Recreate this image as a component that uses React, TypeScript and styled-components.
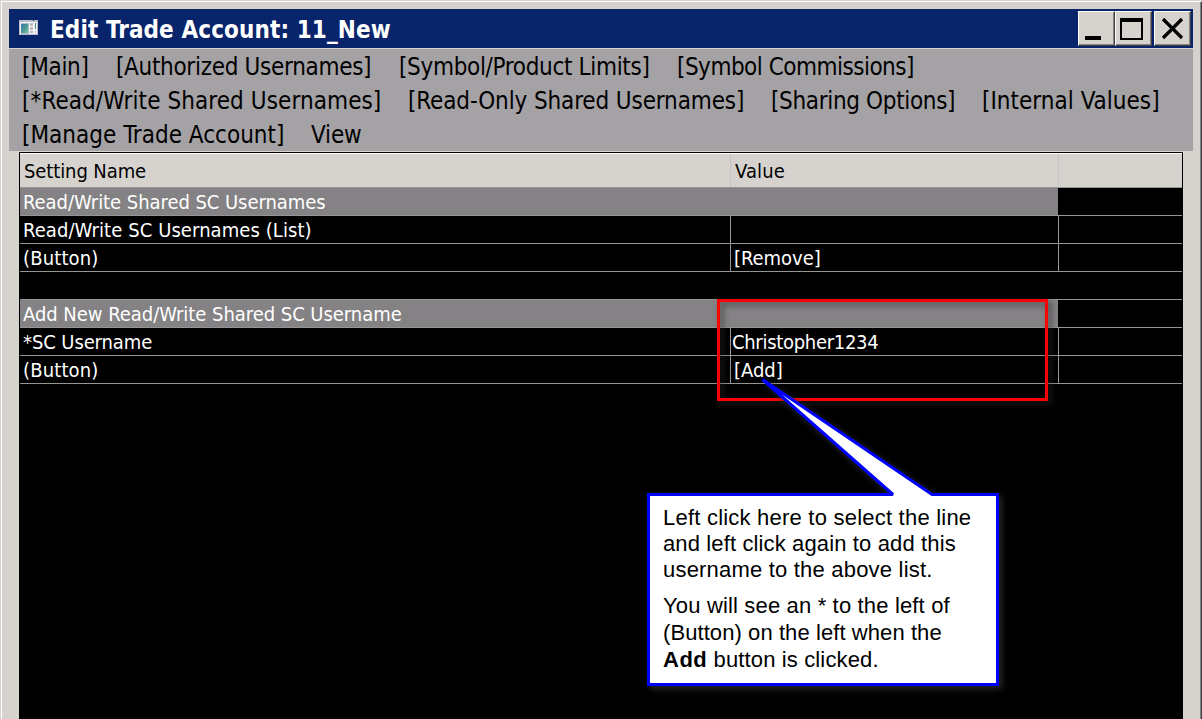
import React from 'react';
import styled, { createGlobalStyle } from 'styled-components';

const Global = createGlobalStyle`
  * { box-sizing: border-box; }
  html, body { margin: 0; padding: 0; }
  body { background: #d6d3ce; overflow: hidden; }
`;

const Window = styled.div`
  position: relative;
  width: 1202px;
  height: 719px;
  display: flex;
  background: #d6d3ce;
  overflow: hidden;
  padding: 1px 0 0 1px;
  font-family: 'DejaVu Sans Condensed', Tahoma, 'DejaVu Sans', sans-serif;
  color: #000;
`;

const Frame = styled.div`
  width: 1201px;
  height: 730px;
  padding: 7px 7px 0;
  border-style: solid;
  border-width: 1px;
  border-color: #fff #3f4044 #3f4044 #fff;
  box-shadow: inset -1px 0 0 #848284;
`;

const TitleBar = styled.header`
  display: flex;
  align-items: center;
  width: 1184px;
  height: 39px;
  padding: 0 2px 0 10px;
  background: #08246b;
`;

const AppIcon = styled.svg`
  width: 19px;
  height: 15px;
  margin-top: -2px;
`;

const Title = styled.h1`
  flex: 1;
  margin: 2px 0 0 12px;
  color: #fff;
  font-size: 24px;
  line-height: 30px;
  font-weight: bold;
  letter-spacing: 0.1px;
  white-space: nowrap;
`;

const WindowButtons = styled.div`
  display: flex;
  margin-bottom: 1px;
`;

const WindowButton = styled.button<{ $apart?: boolean }>`
  display: block;
  width: 37px;
  height: 35px;
  margin-left: ${(p) => (p.$apart ? 2 : 0)}px;
  padding: 0;
  border: 1px solid;
  border-color: #fff #424142 #424142 #fff;
  background: #d6d3ce;
  box-shadow: inset -1px -1px 0 #848284;

  svg { display: block; }
`;

const Menu = styled.nav`
  width: 1184px;
  height: 102px;
  margin-top: 1px;
  padding-left: 13px;
  background: #a5a2a5;
`;

const MenuLine = styled.div`
  display: flex;
  height: 34px;
`;

const MenuItem = styled.span<{ $w: number; $ls: number }>`
  flex: none;
  width: ${(p) => p.$w}px;
  font-size: 24px;
  line-height: 36px;
  letter-spacing: ${(p) => p.$ls}px;
  white-space: nowrap;
`;

const Table = styled.section`
  width: 1164px;
  height: 600px;
  margin: 1px 0 0 10px;
  border: 1px solid #000;
  background: #000;
`;

const Row = styled.div`
  display: grid;
  grid-template-columns: 711px 328px 123px;
  grid-template-rows: 100%;
  height: 28px;
  border-bottom: 1px solid #949694;
  color: #fff;
`;

const HeaderRow = styled(Row)`
  height: 35px;
  background: #d6d3ce;
  border-top: 1px solid #fff;
  color: #000;
`;

const Cell = styled.div<{ $ls?: number; $pad?: number }>`
  padding-left: ${(p) => p.$pad ?? 3}px;
  border-right: 1px solid #949694;
  font-size: 20px;
  line-height: 29px;
  letter-spacing: ${(p) => p.$ls ?? 0}px;
  white-space: nowrap;

  &:last-child { border-right: 0; }
`;

const HeaderCell = styled(Cell)`
  line-height: 35px;
  border-right-color: #c6c3c6;
`;

const GroupCell = styled.div<{ $ls: number }>`
  grid-column: 1 / 3;
  margin-right: 1px;
  padding-left: 3px;
  background: #848284;
  font-size: 20px;
  line-height: 29px;
  letter-spacing: ${(p) => p.$ls}px;
  white-space: nowrap;
`;

const Highlight = styled.div`
  position: absolute;
  left: 717px;
  top: 299px;
  width: 331px;
  height: 102px;
  border: 3px solid #f00;
  filter: drop-shadow(3px 3px 3px rgba(40, 40, 40, 0.8));
`;

const CalloutShape = styled.svg`
  position: absolute;
  left: 640px;
  top: 370px;
  width: 380px;
  height: 340px;
  filter: drop-shadow(3px 3px 3px rgba(50, 50, 50, 0.8));
`;

const CalloutText = styled.div`
  position: absolute;
  left: 663px;
  top: 505px;
  font-family: 'Liberation Sans', Arial, sans-serif;
  font-size: 22px;

  p { margin: 0 0 10px; }
`;

const TextLine = styled.span<{ $ls: number; $h: number }>`
  display: block;
  height: ${(p) => p.$h}px;
  line-height: 26px;
  letter-spacing: ${(p) => p.$ls}px;
  white-space: nowrap;

  b { letter-spacing: 0.5px; }
`;

const menu = [
  [
    { text: '[Main]', w: 94, ls: -0.3 },
    { text: '[Authorized Usernames]', w: 283, ls: -0.31 },
    { text: '[Symbol/Product Limits]', w: 278, ls: -0.33 },
    { text: '[Symbol Commissions]', w: 240, ls: -0.51 },
  ],
  [
    { text: '[*Read/Write Shared Usernames]', w: 386, ls: 0.08 },
    { text: '[Read-Only Shared Usernames]', w: 363, ls: -0.13 },
    { text: '[Sharing Options]', w: 211, ls: -0.34 },
    { text: '[Internal Values]', w: 180, ls: 0.02 },
  ],
  [
    { text: '[Manage Trade Account]', w: 289, ls: 0.01 },
    { text: 'View', w: 60, ls: -0.18 },
  ],
];

export default function App() {
  return (
    <Window>
      <Global />
      <Frame>
        <TitleBar>
          <AppIcon viewBox="0 0 19 15">
            <defs>
              <linearGradient id="screen" x1="0" y1="0" x2="1" y2="1">
                <stop offset="0" stopColor="#3c78a8" />
                <stop offset="0.55" stopColor="#4a9a90" />
                <stop offset="1" stopColor="#8cc8a0" />
              </linearGradient>
            </defs>
            <rect width="19" height="15" fill="#b8bcc8" />
            <rect x="1" y="2" width="17" height="12" fill="#f4f4f6" />
            <rect x="14" y="0" width="1" height="1" fill="#31427a" />
            <rect x="2" y="3" width="8" height="11" fill="#a8bcd0" />
            <rect x="2" y="4" width="7" height="9" fill="url(#screen)" />
            <rect x="11" y="3" width="3" height="3" fill="#bdbdc0" />
            <rect x="11" y="7" width="3" height="3" fill="#bdbdc0" />
            <rect x="11" y="11" width="3" height="2" fill="#bdbdc0" />
            <rect x="16" y="3" width="1" height="6" fill="#3f8f80" />
            <rect x="16" y="11" width="1" height="2" fill="#c8c8cc" />
          </AppIcon>
          <Title>Edit Trade Account: 11_New</Title>
          <WindowButtons>
            <WindowButton aria-label="Minimize">
              <svg width="35" height="33"><rect x="6" y="24" width="16" height="4" /></svg>
            </WindowButton>
            <WindowButton aria-label="Maximize">
              <svg width="35" height="33">
                <path fillRule="evenodd" d="M4 6H27V28H4ZM6 10V26H25V10Z" />
              </svg>
            </WindowButton>
            <WindowButton $apart aria-label="Close">
              <svg width="35" height="33">
                <path d="M8 7L27 26M27 7L8 26" stroke="#000" strokeWidth="3.2" />
              </svg>
            </WindowButton>
          </WindowButtons>
        </TitleBar>
        <Menu>
          {menu.map((line, i) => (
            <MenuLine key={i}>
              {line.map((m) => (
                <MenuItem key={m.text} $w={m.w} $ls={m.ls}>{m.text}</MenuItem>
              ))}
            </MenuLine>
          ))}
        </Menu>
        <Table>
          <HeaderRow>
            <HeaderCell $pad={4} $ls={-0.1}>Setting Name</HeaderCell>
            <HeaderCell $pad={4} $ls={0.13}>Value</HeaderCell>
            <HeaderCell />
          </HeaderRow>
          <Row><GroupCell $ls={-0.05}>Read/Write Shared SC Usernames</GroupCell></Row>
          <Row><Cell $ls={0.08}>Read/Write SC Usernames (List)</Cell><Cell /><Cell /></Row>
          <Row><Cell $ls={0.15}>(Button)</Cell><Cell $ls={-0.04}>[Remove]</Cell><Cell /></Row>
          <Row />
          <Row><GroupCell $ls={-0.04}>Add New Read/Write Shared SC Username</GroupCell></Row>
          <Row><Cell $ls={-0.1}>*SC Username</Cell><Cell $pad={1} $ls={-0.3}>Christopher1234</Cell><Cell /></Row>
          <Row><Cell $ls={0.15}>(Button)</Cell><Cell $ls={-0.03}>[Add]</Cell><Cell /></Row>
        </Table>
      </Frame>
      <Highlight />
      <CalloutShape viewBox="640 370 380 340">
        <path
          d="M648.5 494.5H893L762.5 379.5L932 494.5H997.5V684.5H648.5Z"
          fill="#fff"
          stroke="#00f"
          strokeWidth="3"
          strokeMiterlimit="2"
        />
      </CalloutShape>
      <CalloutText>
        <p>
          <TextLine $h={26} $ls={0.22}>Left click here to select the line</TextLine>
          <TextLine $h={26} $ls={0.13}>and left click again to add this</TextLine>
          <TextLine $h={26} $ls={0.2}>username to the above list.</TextLine>
        </p>
        <p>
          <TextLine $h={27} $ls={0.16}>You will see an * to the left of</TextLine>
          <TextLine $h={27} $ls={0.08}>(Button) on the left when the</TextLine>
          <TextLine $h={27} $ls={0.14}><b>Add</b> button is clicked.</TextLine>
        </p>
      </CalloutText>
    </Window>
  );
}
